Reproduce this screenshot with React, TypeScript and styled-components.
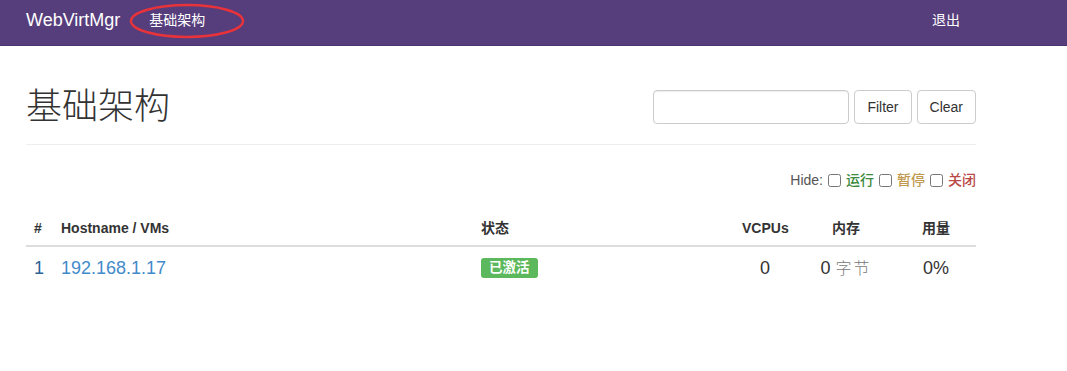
import React from "react";
import styled, { createGlobalStyle } from "styled-components";

const GlobalStyle = createGlobalStyle`
  body {
    margin: 0;
    font-family: "Liberation Sans", Arial, "Noto Sans CJK SC", sans-serif;
    font-size: 14px;
    line-height: 1.42857;
    color: #333;
    background: #fff;
  }
  * { box-sizing: border-box; }
`;

const cjk = `"Liberation Sans", "Noto Sans CJK SC", sans-serif`;

const Navbar = styled.nav`
  position: relative;
  height: 46px;
  background: #563d7c;
  border-bottom: 1px solid #4a3370;
  display: flex;
  align-items: center;
  padding: 0 26px;
`;

const Brand = styled.a`
  color: #fff;
  font-size: 18px;
  text-decoration: none;
  margin-right: 29px;
  margin-top: -3px;
`;

const NavLink = styled.a<{ $push?: boolean }>`
  color: #fff;
  font-family: ${cjk};
  font-size: 14px;
  text-decoration: none;
  margin-top: -3px;
  ${(p) => (p.$push ? "margin-left: auto; margin-right: 81px;" : "")}
`;

const Annotation = styled.svg`
  position: absolute;
  left: 128px;
  top: 2px;
  pointer-events: none;
`;

const Main = styled.main`
  padding: 0 91px 0 26px;
`;

const PageHeader = styled.div`
  display: flex;
  align-items: center;
  justify-content: space-between;
  margin-top: 41px;
  padding-bottom: 17px;
  border-bottom: 1px solid #eee;
`;

const Title = styled.h1`
  margin: 0;
  font-family: ${cjk};
  font-weight: 300;
  font-size: 36px;
  line-height: 40px;
  color: #333;
`;

const FilterForm = styled.form`
  display: flex;
  gap: 5px;
`;

const SearchInput = styled.input`
  width: 196px;
  height: 34px;
  border: 1px solid #ccc;
  border-radius: 4px;
  box-shadow: inset 0 1px 1px rgba(0, 0, 0, 0.075);
  padding: 6px 12px;
  font-size: 14px;
`;

const Button = styled.button`
  height: 34px;
  padding: 6px 12px;
  background: #fff;
  border: 1px solid #ccc;
  border-radius: 4px;
  font-family: "Liberation Sans", Arial, sans-serif;
  font-size: 14px;
  color: #333;
`;

const HideRow = styled.div`
  display: flex;
  justify-content: flex-end;
  align-items: center;
  margin-top: 25px;
  line-height: 20px;
  font-family: ${cjk};
`;

const HideText = styled.span`
  color: #555;
`;

const Check = styled.input`
  width: 13px;
  height: 13px;
  margin: 0 5px 0 5px;
`;

const StateLabel = styled.span<{ $color: string }>`
  color: ${(p) => p.$color};
  font-weight: 500;
  font-size: 14px;
`;

const Table = styled.table`
  width: 950px;
  margin-top: 20px;
  border-collapse: collapse;
  table-layout: fixed;
`;

const Th = styled.th<{ $center?: boolean }>`
  padding: 8px 8px 7px;
  text-align: ${(p) => (p.$center ? "center" : "left")};
  font-family: ${cjk};
  font-weight: bold;
  font-size: 14px;
  line-height: 20px;
  border-bottom: 2px solid #ddd;
`;

const Td = styled.td<{ $center?: boolean }>`
  padding: 8px;
  text-align: ${(p) => (p.$center ? "center" : "left")};
  font-size: 18px;
  line-height: 24px;
  color: #333;
`;

const RowNum = styled(Td)`
  color: #2a6496;
`;

const HostLink = styled.a`
  color: #428bca;
  text-decoration: none;
`;

const Badge = styled.span`
  display: inline-block;
  background: #5cb85c;
  color: #fff;
  font-family: ${cjk};
  font-weight: bold;
  font-size: 13.5px;
  line-height: 1;
  padding: 3px 8px 4px;
  border-radius: 3px;
  vertical-align: 2px;
`;

const Unit = styled.span`
  font-family: "Noto Sans CJK SC", sans-serif;
  font-weight: 300;
  color: #777;
  font-size: 16px;
  letter-spacing: 2px;
`;

export default function App() {
  return (
    <>
      <GlobalStyle />
      <Navbar>
        <Brand href="#">WebVirtMgr</Brand>
        <NavLink href="#">基础架构</NavLink>
        <NavLink href="#" $push>
          退出
        </NavLink>
        <Annotation width="118" height="40" viewBox="0 0 118 40">
          <ellipse cx="59" cy="19" rx="56" ry="16" fill="none" stroke="#e8333a" strokeWidth="2.5" />
        </Annotation>
      </Navbar>
      <Main>
        <PageHeader>
          <Title>基础架构</Title>
          <FilterForm onSubmit={(e) => e.preventDefault()}>
            <SearchInput type="text" />
            <Button type="button">Filter</Button>
            <Button type="button">Clear</Button>
          </FilterForm>
        </PageHeader>
        <HideRow>
          <HideText>Hide:</HideText>
          <Check type="checkbox" />
          <StateLabel $color="#3c8a3d">运行</StateLabel>
          <Check type="checkbox" />
          <StateLabel $color="#c0994e">暂停</StateLabel>
          <Check type="checkbox" />
          <StateLabel $color="#b94a48">关闭</StateLabel>
        </HideRow>
        <Table>
          <colgroup>
            <col style={{ width: 27 }} />
            <col style={{ width: 420 }} />
            <col style={{ width: 261 }} />
            <col style={{ width: 62 }} />
            <col style={{ width: 100 }} />
            <col style={{ width: 80 }} />
          </colgroup>
          <thead>
            <tr>
              <Th>#</Th>
              <Th>Hostname / VMs</Th>
              <Th>状态</Th>
              <Th $center>VCPUs</Th>
              <Th $center>内存</Th>
              <Th $center>用量</Th>
            </tr>
          </thead>
          <tbody>
            <tr>
              <RowNum>1</RowNum>
              <Td>
                <HostLink href="#">192.168.1.17</HostLink>
              </Td>
              <Td>
                <Badge>已激活</Badge>
              </Td>
              <Td $center>0</Td>
              <Td $center>
                0 <Unit>字节</Unit>
              </Td>
              <Td $center>0%</Td>
            </tr>
          </tbody>
        </Table>
      </Main>
    </>
  );
}
